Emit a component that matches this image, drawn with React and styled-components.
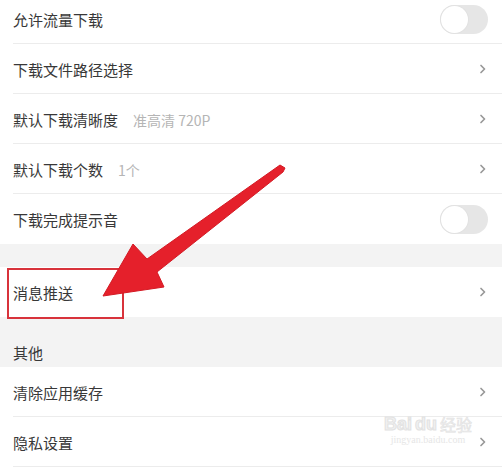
import React from 'react';
import styled, { createGlobalStyle } from 'styled-components';

const GlobalStyle = createGlobalStyle`
    html, body {
        margin: 0;
        padding: 0;
        background: #fff;
        overflow: hidden;
    }
    body {
        font-family: "Noto Sans CJK SC", "Noto Sans", sans-serif;
    }
`;

const Page = styled.div`
    position: relative;
    width: 502px;
    height: 467px;
    overflow: hidden;
    background: #fff;
`;

const List = styled.div`
    margin-top: -6px;
    display: flex;
    flex-direction: column;
`;

const Row = styled.div`
    display: flex;
    align-items: center;
    height: 50px;
    padding: 0 14px 0 13px;
    box-sizing: border-box;
    background: #fff;
    position: relative;

    &::after {
        content: "";
        display: ${props => (props.last ? 'none' : 'block')};
        position: absolute;
        left: 13px;
        right: 0;
        bottom: 0;
        height: 1px;
        background: #ececec;
    }
`;

const Label = styled.span`
    font-size: 15px;
    color: #383838;
    line-height: 20px;
    padding-top: 1px;
`;

const Value = styled.span`
    font-size: 14px;
    color: #b5b5b5;
    margin-left: 15px;
    line-height: 20px;
    padding-top: 1px;
`;

const Spacer = styled.div`
    flex: 1;
`;

const Gap = styled.div`
    height: 23px;
    background: #f3f3f3;
`;

const Header = styled.div`
    height: 50px;
    box-sizing: border-box;
    padding: 26px 13px 0;
    background: #f3f3f3;
    font-size: 15px;
    line-height: 20px;
    color: #383838;
`;

const Track = styled.div`
    width: 48px;
    height: 29px;
    border-radius: 15px;
    background: #e6e6e6;
    box-sizing: border-box;
    padding: 1px;
    display: flex;
    align-items: center;
`;

const Knob = styled.div`
    width: 27px;
    height: 27px;
    border-radius: 50%;
    background: #fff;
    box-shadow: 0 0 0 1px #e2e2e2;
`;

const Highlight = styled.div`
    position: absolute;
    left: 7px;
    top: 268px;
    width: 117px;
    height: 51px;
    box-sizing: border-box;
    border: 2px solid #d8333b;
`;

const ArrowLayer = styled.svg`
    position: absolute;
    left: 0;
    top: 0;
    pointer-events: none;
`;

const Watermark = styled.div`
    position: absolute;
    left: 384px;
    top: 414px;
    display: flex;
    flex-direction: column;
    align-items: center;
    color: #f1f1f1;
    font-family: "Liberation Sans", sans-serif;
    pointer-events: none;
`;

const MarkTop = styled.div`
    display: flex;
    align-items: flex-end;
    gap: 3px;
    font-size: 18px;
    font-weight: bold;
    line-height: 20px;
    -webkit-text-stroke: 1px #e2e2e2;
`;

const MarkCjk = styled.span`
    font-family: "Noto Sans CJK SC", sans-serif;
    font-weight: normal;
    font-size: 16px;
    -webkit-text-stroke: 0.6px #e2e2e2;
`;

const MarkSub = styled.div`
    font-size: 10px;
    line-height: 12px;
    color: #e6e6e6;
    font-family: "Liberation Serif", serif;
`;

const Chevron = () => (
    <svg width="8" height="10" viewBox="0 0 8 10" style={{ marginRight: 1 }}>
        <path d="M2 1.5 L5.5 5 L2 8.5" fill="none" stroke="#999" strokeWidth="1.7" strokeLinecap="round" strokeLinejoin="round" />
    </svg>
);

const Toggle = () => (
    <Track>
        <Knob />
    </Track>
);

const topRows = [
    { label: '允许流量下载', toggle: true },
    { label: '下载文件路径选择' },
    { label: '默认下载清晰度', value: '准高清 720P' },
    { label: '默认下载个数', value: '1个' },
    { label: '下载完成提示音', toggle: true, last: true },
];

const SettingRow = ({ label, value, toggle, last }) => (
    <Row last={last}>
        <Label>{label}</Label>
        {value && <Value>{value}</Value>}
        <Spacer />
        {toggle ? <Toggle /> : <Chevron />}
    </Row>
);

export default function App() {
    return (
        <Page>
            <GlobalStyle />
            <List>
                {topRows.map(r => <SettingRow key={r.label} {...r} />)}
                <Gap />
                <SettingRow label="消息推送" last />
                <Header>其他</Header>
                <SettingRow label="清除应用缓存" />
                <SettingRow label="隐私设置" />
            </List>

            <Watermark>
                <MarkTop>
                    <span>Bai</span>
                    <span>du</span>
                    <MarkCjk>经验</MarkCjk>
                </MarkTop>
                <MarkSub>jingyan.baidu.com</MarkSub>
            </Watermark>

            <Highlight />
            <ArrowLayer width="502" height="467" viewBox="0 0 502 467">
                <polygon
                    points="103,296 133,244 147,259 280,165 285,168 283,172 157,272 164,287"
                    fill="#e5202b"
                    stroke="#d41a24"
                    strokeWidth="1"
                    strokeLinejoin="round"
                />
            </ArrowLayer>
        </Page>
    );
}
